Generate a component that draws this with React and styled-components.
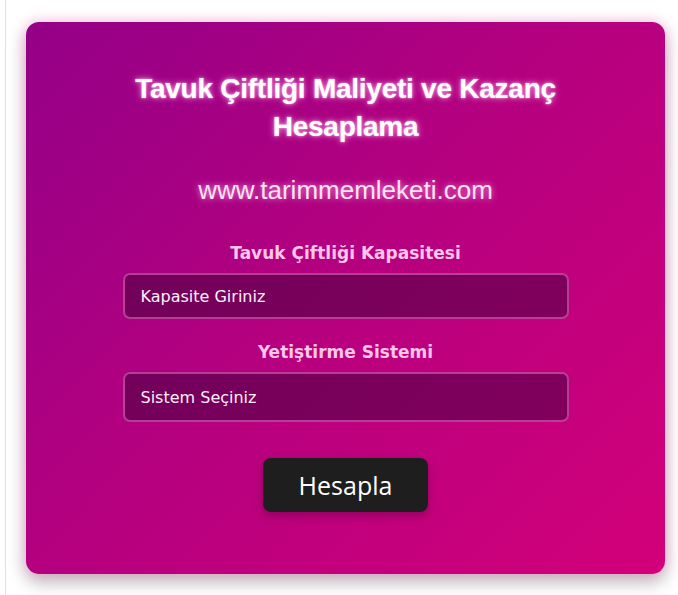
import React from "react";
import styled, { createGlobalStyle } from "styled-components";

const Global = createGlobalStyle`
  html, body { margin: 0; padding: 0; background: #ffffff; }
  body { font-family: "Liberation Sans", Arial, sans-serif; }
`;

const Page = styled.div`
  margin-left: 5px;
  border-left: 1px solid #e2e2e2;
  min-height: 595px;
  box-sizing: border-box;
  padding: 22px 0 0 20px;
`;

const Card = styled.div`
  width: 639px;
  height: 552px;
  box-sizing: border-box;
  border-radius: 13px;
  background: linear-gradient(135deg, #940088 0%, #b7007f 50%, #d3007a 100%);
  box-shadow: 0 0 14px rgba(255, 120, 200, 0.45), 0 8px 18px rgba(0, 0, 0, 0.28);
  display: flex;
  flex-direction: column;
  align-items: center;
  padding-top: 48px;
`;

const Title = styled.h1`
  margin: 0;
  width: 520px;
  text-align: center;
  font-family: "Liberation Sans", Arial, sans-serif;
  font-weight: 700;
  font-size: 28px;
  line-height: 38px;
  letter-spacing: -0.25px;
  color: #ffffff;
  text-shadow: 0 0 6px rgba(255, 170, 230, 0.95), 0 0 2px rgba(255, 200, 240, 0.9);
`;

const Site = styled.div`
  margin-top: 29px;
  font-family: "Liberation Sans", Arial, sans-serif;
  font-size: 26px;
  line-height: 30px;
  color: #ffe3f3;
  text-shadow: 0 0 6px rgba(255, 170, 230, 0.9);
`;

const Field = styled.div`
  display: flex;
  flex-direction: column;
  align-items: center;
  width: 446px;
  margin-top: ${(p) => p.$top}px;
`;

const Label = styled.label`
  font-family: "DejaVu Sans", Verdana, sans-serif;
  font-weight: 700;
  font-size: 17px;
  line-height: 22px;
  color: #ffc6ea;
  margin-bottom: 9px;
`;

const Box = styled.div`
  width: 100%;
  height: ${(p) => p.$h}px;
  box-sizing: border-box;
  border-radius: 7px;
  border: 2px solid rgba(255, 140, 220, 0.45);
  background: linear-gradient(135deg, #72005a 0%, #80005c 100%);
  display: flex;
  align-items: center;
  padding-left: 16px;
  font-family: "DejaVu Sans", Verdana, sans-serif;
  font-size: 16px;
  color: #fff0fa;
`;

const Button = styled.button`
  margin-top: 36px;
  width: 165px;
  height: 54px;
  border: none;
  border-radius: 8px;
  background: #1e1e1e;
  color: #ffffff;
  font-family: "Open Sans", "DejaVu Sans", sans-serif;
  font-size: 25px;
  box-shadow: 0 4px 10px rgba(60, 0, 40, 0.35);
  padding: 0;
`;

export default function App() {
  return (
    <>
      <Global />
      <Page>
        <Card>
          <Title>Tavuk Çiftliği Maliyeti ve Kazanç Hesaplama</Title>
          <Site>www.tarimmemleketi.com</Site>
          <Field $top={37}>
            <Label>Tavuk Çiftliği Kapasitesi</Label>
            <Box $h={46}>Kapasite Giriniz</Box>
          </Field>
          <Field $top={22}>
            <Label>Yetiştirme Sistemi</Label>
            <Box $h={50}>Sistem Seçiniz</Box>
          </Field>
          <Button>Hesapla</Button>
        </Card>
      </Page>
    </>
  );
}
